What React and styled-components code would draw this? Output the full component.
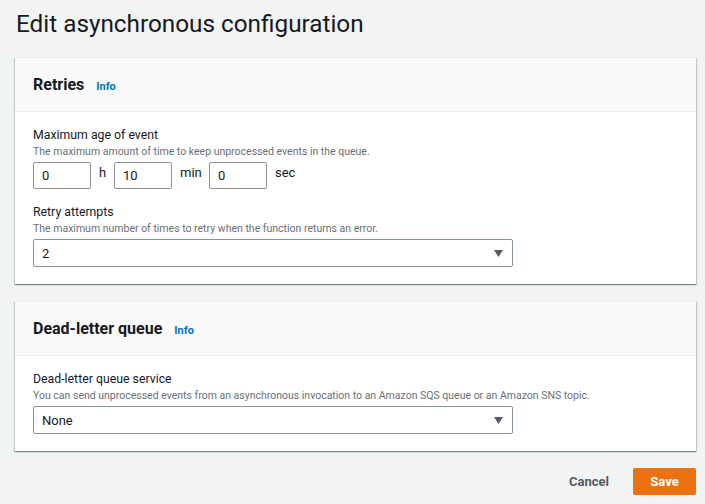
import React from 'react'
import styled, { createGlobalStyle } from 'styled-components'

const GlobalStyle = createGlobalStyle`
  html, body {
    margin: 0;
    padding: 0;
    background: #f2f3f3;
  }
  body {
    font-family: Roboto, "Liberation Sans", Arial, sans-serif;
    color: #16191f;
  }
`

const Page = styled.div`
  width: 705px;
  height: 504px;
  box-sizing: border-box;
  padding: 7px 9px 0 15px;
  overflow: hidden;
`

const Title = styled.h1`
  margin: 0 0 17px 1px;
  font-size: 24.3px;
  font-weight: 400;
  line-height: 33px;
  color: #16191f;
`

const Panel = styled.section`
  background: #fff;
  box-shadow: 0 1px 1px 0 rgba(0, 28, 36, 0.3), 1px 1px 1px 0 rgba(0, 28, 36, 0.15),
    -1px 1px 1px 0 rgba(0, 28, 36, 0.15);
  border-top: 1px solid #eaeded;
  margin-bottom: 17px;
`

const PanelHeader = styled.header`
  display: flex;
  align-items: baseline;
  gap: 12px;
  height: 54px;
  box-sizing: border-box;
  padding: 17px 18px 0;
  background: #fafafa;
  border-bottom: 1px solid #eaeded;
`

const HeaderTitle = styled.h2`
  margin: 0;
  font-size: 16px;
  font-weight: 700;
  line-height: 20px;
`

const InfoLink = styled.a`
  font-size: 11px;
  font-weight: 700;
  color: #0073bb;
  text-decoration: none;
`

const PanelBody = styled.div`
  padding: 15px 18px 17px;
`

const Field = styled.div`
  & + & {
    margin-top: 15px;
  }
`

const Label = styled.div`
  font-size: 12.3px;
  line-height: 17px;
  color: #16191f;
`

const Description = styled.div`
  font-size: 10.5px;
  line-height: 15px;
  color: #687078;
  margin-bottom: 3px;
`

const DurationRow = styled.div`
  display: flex;
  align-items: center;
`

const NumberInput = styled.div`
  width: 58px;
  height: 27px;
  box-sizing: border-box;
  border: 1px solid #879596;
  border-radius: 2px;
  padding: 0 8px;
  display: flex;
  align-items: center;
  font-size: 13px;
  background: #fff;
`

const Unit = styled.span`
  font-size: 13px;
  color: #16191f;
  width: ${p => p.$w}px;
  padding-left: 8px;
  box-sizing: border-box;
  align-self: flex-start;
  line-height: 22px;
`

const Select = styled.div`
  width: 480px;
  height: 28px;
  box-sizing: border-box;
  border: 1px solid #879596;
  border-radius: 2px;
  padding: 0 9px 0 8px;
  display: flex;
  align-items: center;
  justify-content: space-between;
  font-size: 13px;
  background: #fff;
`

const Caret = styled.svg`
  width: 9px;
  height: 7px;
`

const Actions = styled.div`
  display: flex;
  justify-content: flex-end;
  align-items: center;
  gap: 24px;
`

const TextButton = styled.button`
  border: none;
  background: none;
  font-family: inherit;
  font-size: 13px;
  font-weight: 700;
  color: #545b64;
  padding: 0;
  cursor: pointer;
`

const PrimaryButton = styled.button`
  width: 63px;
  height: 27px;
  border: none;
  border-radius: 2px;
  background: #ec7211;
  color: #fff;
  font-family: inherit;
  font-size: 13px;
  font-weight: 700;
  cursor: pointer;
`

const DropCaret = () => (
  <Caret viewBox="0 0 9 7">
    <path d="M0 0h9L4.5 7z" fill="#545b64" />
  </Caret>
)

const App = () => (
  <Page>
    <GlobalStyle />
    <Title>Edit asynchronous configuration</Title>

    <Panel>
      <PanelHeader>
        <HeaderTitle>Retries</HeaderTitle>
        <InfoLink href="#">Info</InfoLink>
      </PanelHeader>
      <PanelBody>
        <Field>
          <Label>Maximum age of event</Label>
          <Description>The maximum amount of time to keep unprocessed events in the queue.</Description>
          <DurationRow>
            <NumberInput>0</NumberInput>
            <Unit $w={23}>h</Unit>
            <NumberInput>10</NumberInput>
            <Unit $w={37}>min</Unit>
            <NumberInput>0</NumberInput>
            <Unit $w={36}>sec</Unit>
          </DurationRow>
        </Field>
        <Field>
          <Label>Retry attempts</Label>
          <Description>The maximum number of times to retry when the function returns an error.</Description>
          <Select>
            <span>2</span>
            <DropCaret />
          </Select>
        </Field>
      </PanelBody>
    </Panel>

    <Panel>
      <PanelHeader>
        <HeaderTitle>Dead-letter queue</HeaderTitle>
        <InfoLink href="#">Info</InfoLink>
      </PanelHeader>
      <PanelBody>
        <Field>
          <Label>Dead-letter queue service</Label>
          <Description>
            You can send unprocessed events from an asynchronous invocation to an Amazon SQS queue or an Amazon SNS topic.
          </Description>
          <Select>
            <span>None</span>
            <DropCaret />
          </Select>
        </Field>
      </PanelBody>
    </Panel>

    <Actions>
      <TextButton>Cancel</TextButton>
      <PrimaryButton>Save</PrimaryButton>
    </Actions>
  </Page>
)

export default App
